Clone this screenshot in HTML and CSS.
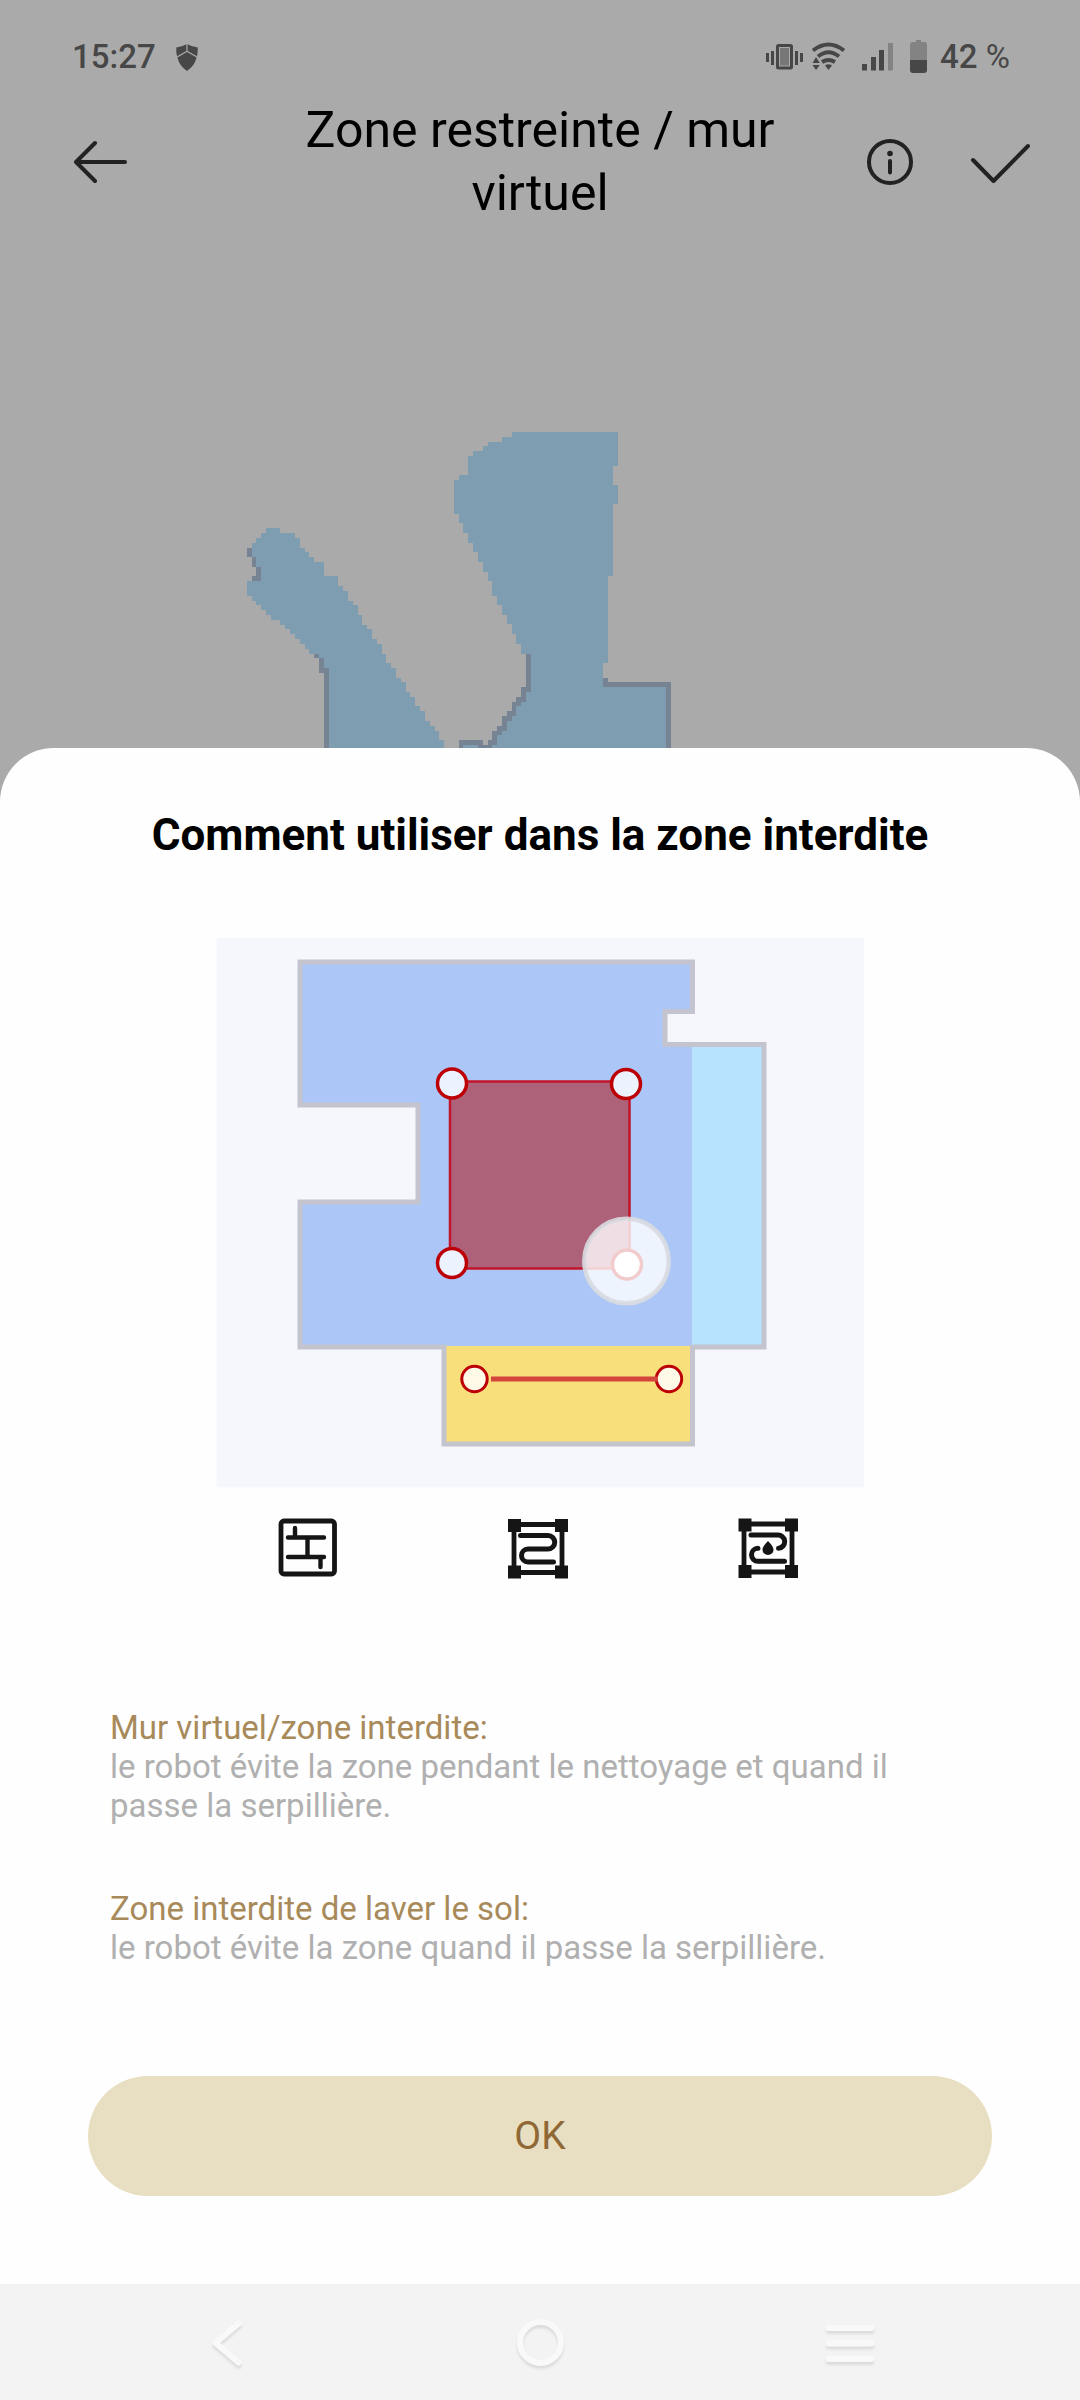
FILE: index.html
```html
<!DOCTYPE html>
<html lang="fr">
<head>
<meta charset="utf-8">
<meta name="viewport" content="width=device-width, initial-scale=1">
<title>Zone restreinte / mur virtuel</title>
<link rel="stylesheet" href="styles.css">
</head>
<body>
<div class="status-bar">
  <div class="status-group">
    <span class="clock">15:27</span>
    <svg class="shield" width="22" height="27" viewBox="0 0 22 27" aria-hidden="true">
      <path d="M10.400 0.300V7L1 12.200Q0 8 0.300 3.500Q6 3 10.400 0.300ZM11.600 0.300V7L21 12.200Q22 8 21.700 3.500Q16 3 11.600 0.300ZM11 8L20.600 13.500Q18.500 22 11 27Q3.500 22 1.400 13.500Z"/>
    </svg>
  </div>
  <div class="status-group status-right">
    <svg width="133" height="34" viewBox="766 40 133 34" aria-hidden="true">
      <path d="M767 53h3v9h-3zM772 51h3v14h-3zM796 51h3v14h-3zM801 53h3v9h-3z"/>
      <rect x="778.500" y="45.500" width="14" height="22.500" rx="1" fill="none" stroke="#474747" stroke-width="3"/>
      <rect x="781" y="48" width="9" height="17.500" fill="#777"/>
      <g fill="none" stroke="#474747" stroke-width="4">
        <path d="M814 50.500Q829.500 38.500 845 50.500"/>
        <path d="M819 56.500Q829.500 48 840 56.500"/>
        <path d="M823 62Q829.500 58 836 62"/>
      </g>
      <path d="M826 65.500Q829.500 63 833 65.500L829.500 70ZM813.500 63L817 57L820.800 63ZM813.500 65H820.800L817 70Z"/>
      <path d="M863 64h5v6.500h-5zM872 57h5v13.500h-5zM880 50h5v20.500h-5z"/>
      <path d="M889 43h5v27.500h-5z" fill="#838383"/>
    </svg>
    <svg width="18" height="34" viewBox="912 40 18 34" aria-hidden="true">
      <path d="M912 60V45Q912 42 915 42H918V40H923V42H926Q929 42 929 45V60Z" fill="#838383"/>
      <path d="M912 60H929V70Q929 73 926 73H915Q912 73 912 70Z"/>
    </svg>
    <span class="battery-level">42 <span class="unit">%</span></span>
  </div>
</div>

<header class="app-bar">
  <button class="icon-button back" type="button" aria-label="Retour">
    <svg width="54" height="46" viewBox="0 0 54 46"><path d="M21 4L2 23L21 42M2 23H51"/></svg>
  </button>
  <h1 class="title">Zone restreinte / mur virtuel</h1>
  <div class="actions">
    <button class="icon-button" type="button" aria-label="Aide">
      <svg width="48" height="48" viewBox="0 0 48 48"><circle cx="24" cy="24" r="21"/><path d="M24 23V34.500"/><circle class="dot" cx="24" cy="15.500" r="2.800"/></svg>
    </button>
    <button class="icon-button" type="button" aria-label="Valider">
      <svg width="60" height="46" viewBox="0 0 60 46"><path d="M3 21L23.500 42L58 7"/></svg>
    </button>
  </div>
</header>

<main class="map">
  <svg class="map-drawing" viewBox="-660 0 3240 1041" shape-rendering="crispEdges" role="img" aria-label="Carte du logement">
    <path class="floor" d="M138 381H180V396H225V411H240V441H255V453H267V468H282V483H312V525H354V555H369V570H384V600H399V612H414V642H426V672H441V684H456V714H471V729H486V759H498V786H513V801H528V831H543V843H558V873H570V888H585V915H600V930H615V960H630V975H645V990H657V1017H672V1041H327V801H312V771H297V759H267V744H255V729H240V714H225V699H210V684H195V672H180V657H153V642H138V627H123V612H108V600H96V585H81V540H123V498H108V468H96V426H108V411H123V396H138Z"/>
    <path class="floor" d="M876 93H1194V195H1179V252H1194V309H1179V525H1164V786H1149V843H1353V1041H816V1032H831V1002H846V990H861V960H876V945H888V915H903V903H918V873H933V759H903V729H888V699H876V669H861V642H846V612H831V585H816V540H804V513H789V483H774V453H759V426H744V396H729V366H717V339H702V237H717V222H744V165H759V150H789V135H804V123H846V108H876ZM729 1032H774V1041H729Z"/>
    <path class="wall" d="M81 441H96V468H108V498H123V540H96V525H108V498H96V468H81ZM282 759H297V771H312V801H327V1041H312V816H297V771H282ZM918 759V858H903V888H888V903H876V930H861V945H846V975H831V990H816V1017H804V1032H789V1017H717V1041H729V1032H774V1041H816V1032H831V1002H846V990H861V960H876V945H888V915H903V903H918V873H933V759ZM1149 831H1164V843H1353V1041H1338V858H1149Z"/>
  </svg>
</main>

<section class="sheet" role="dialog" aria-labelledby="sheet-title">
  <h2 class="sheet-title" id="sheet-title">Comment utiliser dans la zone interdite</h2>
  <svg class="illustration" viewBox="216 937 648 650" role="img" aria-label="Exemple de zone interdite et de mur virtuel">
    <rect x="216.500" y="937" width="647.500" height="549.500" fill="#f6f7fd"/>
    <path fill="#abc6f7" d="M300 961H692V1010H665V1043H692V1346H300V1201H418V1104H300Z"/>
    <path fill="#b7e3ff" d="M692 1043H764V1346H692Z"/>
    <path fill="#f9df7c" d="M444 1345H692V1443H444Z"/>
    <path fill="none" stroke="#c3c4cd" stroke-width="5" d="M444 1346H300V1201H418V1104H300V961H692.500V1010.500H665V1043.500H764V1346H692.500V1443H444V1343.500"/>
    <rect x="450" y="1080.500" width="179.500" height="187" fill="#ad627a" stroke="#c3142a" stroke-width="2.500"/>
    <g fill="#edf3fe" stroke="#bd0006" stroke-width="3.500">
      <circle cx="452" cy="1082.500" r="14.500"/>
      <circle cx="626" cy="1083" r="14.500"/>
      <circle cx="452" cy="1262" r="14.500"/>
      <circle cx="627" cy="1263.500" r="14.500" fill="#fff"/>
    </g>
    <circle cx="626.500" cy="1260" r="42" fill="#fff" fill-opacity="0.800"/>
    <circle cx="626.500" cy="1260" r="42.200" fill="none" stroke="#d9dce0" stroke-opacity="0.900" stroke-width="4.500"/>
    <g fill="#fff9e8" stroke="#bd0006" stroke-width="3">
      <circle cx="474.500" cy="1378" r="12.700"/>
      <circle cx="669" cy="1378" r="12.700"/>
    </g>
    <path d="M491 1378H658" stroke="#d4453d" stroke-width="5"/>

    <g fill="none" stroke="#151515" stroke-width="4.400">
      <rect x="281" y="1520" width="53.500" height="53" rx="3" stroke-width="4.800"/>
      <path stroke-linecap="round" d="M288 1536.500H324M288 1556H324M307.500 1537V1556M295 1527V1536M320.500 1556V1566"/>
      <path stroke-width="4.800" d="M514 1523.500H562V1571.500H514Z"/>
      <path stroke-width="5" stroke-linecap="round" d="M520.500 1534.500H548A6.500 6.500 0 0 1 548 1548H528A6.500 6.500 0 0 0 528 1561H553.500"/>
      <path stroke-width="4.800" d="M744 1523H792V1571H744Z"/>
      <path stroke-width="5" stroke-linecap="round" d="M751 1534H777.500A6.600 6.600 0 0 1 778.500 1547.300M758 1547.300A6.500 6.500 0 0 0 758 1560.300H784.500"/>
    </g>
    <path fill="#151515" d="M508 1518h13v13h-13zM555 1518h13v13h-13zM508 1564.500h13v13h-13zM555 1564.500h13v13h-13zM738.500 1517.500h13v13h-13zM785 1517.500h13v13h-13zM738.500 1564h13v13h-13zM785 1564h13v13h-13z"/>
    <path fill="#151515" d="M768 1540Q774 1546 773.500 1549A5.500 5 0 0 1 762.500 1549Q762 1546 768 1540Z"/>
  </svg>

  <dl class="notes">
    <div>
      <dt>Mur virtuel/zone interdite:</dt>
      <dd>le robot évite la zone pendant le nettoyage et quand il passe la serpillière.</dd>
    </div>
    <div>
      <dt>Zone interdite de laver le sol:</dt>
      <dd>le robot évite la zone quand il passe la serpillière.</dd>
    </div>
  </dl>

  <button class="confirm" type="button">OK</button>
</section>

<nav class="system-nav" aria-label="Navigation système">
  <button class="nav-button" type="button" aria-label="Précédent">
    <svg width="60" height="60" viewBox="0 0 60 60"><path d="M39.500 9.500L16.500 29L39.500 48.500"/></svg>
  </button>
  <button class="nav-button" type="button" aria-label="Accueil">
    <svg width="60" height="60" viewBox="0 0 60 60"><circle cx="30.500" cy="28.500" r="20.500"/></svg>
  </button>
  <button class="nav-button" type="button" aria-label="Applications récentes">
    <svg width="60" height="60" viewBox="0 0 60 60"><path d="M8 14H50M8 29.500H50M8 45H50"/></svg>
  </button>
</nav>
</body>
</html>
```
FILE: styles.css
```css
* {
  box-sizing: border-box;
}

body {
  margin: 0;
  min-height: 100vh;
  display: flex;
  flex-direction: column;
  background: #aaa;
  color: #000;
  font-family: Roboto, "Liberation Sans", sans-serif;
}

button {
  margin: 0;
  padding: 0;
  border: 0;
  background: none;
  font: inherit;
  cursor: pointer;
}

svg {
  display: block;
}

.status-bar {
  display: flex;
  justify-content: space-between;
  align-items: center;
  padding: 37px 70px 22px 72px;
  font-size: 33px;
  font-weight: 500;
  line-height: 40px;
  color: #474747;
  fill: #474747;
}

.status-group {
  display: flex;
  align-items: center;
  gap: 20px;
}

.status-right {
  gap: 12px;
}

.unit {
  font-weight: 400;
}

.app-bar {
  display: grid;
  grid-template-columns: 1fr 490px 1fr;
  align-items: center;
}

.title {
  margin: 0;
  font-size: 50px;
  font-weight: 400;
  line-height: 63px;
  text-align: center;
}

.icon-button {
  fill: none;
  stroke: #222;
  stroke-width: 4;
  stroke-linecap: round;
  stroke-linejoin: round;
}

.icon-button .dot {
  fill: #222;
  stroke: none;
}

.back {
  justify-self: start;
  padding-left: 74px;
}

.actions {
  display: flex;
  align-items: center;
  justify-content: flex-end;
  gap: 56px;
  padding-right: 50px;
}

.map {
  flex: 1;
  display: flex;
  align-items: flex-end;
}

.map-drawing {
  width: 100%;
}

.floor {
  fill: #7f9db1;
}

.wall {
  fill: #758393;
}

.sheet {
  display: flex;
  flex-direction: column;
  align-items: center;
  padding: 60px 88px 88px;
  border-radius: 54px 54px 0 0;
  background: #fefefe;
}

.sheet-title {
  margin: 0;
  font-size: 44px;
  font-weight: 700;
  line-height: 54px;
  text-align: center;
}

.illustration {
  width: 100%;
  max-width: 648px;
  margin-top: 76px;
}

.notes {
  align-self: stretch;
  display: flex;
  flex-direction: column;
  gap: 64px;
  margin: 120px 0 0;
  padding: 0 22px;
  font-size: 33px;
  line-height: 39px;
}

.notes dt {
  color: #a88a5a;
}

.notes dd {
  margin: 0;
  color: #b0b0b0;
}

.confirm {
  align-self: stretch;
  margin-top: 109px;
  padding: 36px;
  border-radius: 60px;
  background: #e8dfc2;
  color: #8f6835;
  font-size: 39px;
  line-height: 48px;
}

.system-nav {
  display: flex;
  justify-content: space-around;
  padding: 30px 74px 26px;
  background: #f3f3f3;
}

.nav-button {
  fill: none;
  stroke: #f9f9f9;
  stroke-width: 6;
  stroke-linecap: round;
  stroke-linejoin: round;
  filter: drop-shadow(0 3px 1px #dcdcdc);
}
```
